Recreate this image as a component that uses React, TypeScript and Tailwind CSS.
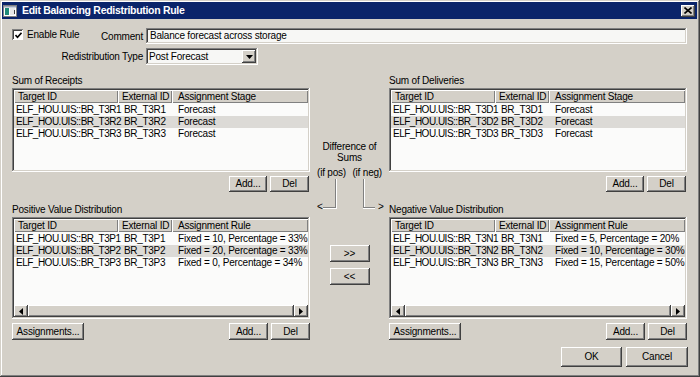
import React from "react";

const FONT = "font-['Liberation_Sans',Arial,sans-serif]";
const RAISED =
  "shadow-[inset_-1px_-1px_#404040,inset_1px_1px_#ffffff,inset_-2px_-2px_#808080,inset_2px_2px_#d4d0c8]";
const SUNKEN =
  "shadow-[inset_-1px_-1px_#ffffff,inset_1px_1px_#808080,inset_-2px_-2px_#d4d0c8,inset_2px_2px_#404040]";

function Btn({ label, className }: { label: string; className: string }) {
  return (
    <div
      className={`${RAISED} bg-[#d4d0c8] flex items-center justify-center leading-none text-black whitespace-nowrap ${className}`}
    >
      {label}
    </div>
  );
}

function ArrowLeft() {
  return (
    <svg width="4" height="7" viewBox="0 0 4 7">
      <path d="M4 0 L0 3.5 L4 7 Z" fill="#000" />
    </svg>
  );
}
function ArrowRight() {
  return (
    <svg width="4" height="7" viewBox="0 0 4 7">
      <path d="M0 0 L4 3.5 L0 7 Z" fill="#000" />
    </svg>
  );
}

function Table({
  headers,
  rows,
  scroll,
  heightClass,
}: {
  headers: string[];
  rows: string[][];
  scroll: boolean;
  heightClass: string;
}) {
  return (
    <div className={`${SUNKEN} bg-[#fbfbfa] p-[2px] flex flex-col ${heightClass}`}>
      <div className="flex h-[13px] shrink-0">
        <div className="w-[104px] bg-[#d4d0c8] shadow-[inset_1px_1px_#ffffff,inset_-1px_-1px_#808080] pl-[4px] leading-[13px] whitespace-nowrap overflow-hidden">
          {headers[0]}
        </div>
        <div className="w-[54px] bg-[#d4d0c8] shadow-[inset_1px_1px_#ffffff,inset_-1px_-1px_#808080] pl-[4px] leading-[13px] whitespace-nowrap overflow-hidden">
          {headers[1]}
        </div>
        <div className="flex-1 bg-[#d4d0c8] shadow-[inset_1px_1px_#ffffff,inset_-1px_-1px_#808080] pl-[6px] leading-[13px] whitespace-nowrap overflow-hidden">
          {headers[2]}
        </div>
      </div>
      <div className="flex-1 pt-[1px] overflow-hidden">
        {rows.map((r, i) => (
          <div
            key={i}
            className={`flex h-[12px] leading-[12px] whitespace-nowrap ${i === 1 ? "bg-[#dcdad6]" : ""}`}
          >
            <div className="w-[104px] pl-[2px] tracking-[-0.5px]">{r[0]}</div>
            <div className="w-[54px] pl-[6px] tracking-[-0.3px]">{r[1]}</div>
            <div className="flex-1 pl-[6px]">{r[2]}</div>
          </div>
        ))}
      </div>
      {scroll && (
        <div className="h-[12px] shrink-0 flex bg-[#e4e2dd]">
          <div className={`${RAISED} bg-[#d4d0c8] w-[14px] h-full flex items-center justify-center`}>
            <ArrowLeft />
          </div>
          <div className={`${RAISED} bg-[#d4d0c8] flex-1 h-full`} />
          <div className={`${RAISED} bg-[#d4d0c8] w-[14px] h-full flex items-center justify-center`}>
            <ArrowRight />
          </div>
        </div>
      )}
    </div>
  );
}

function Column({
  title1,
  title2,
  rows1,
  rows2,
  children,
}: {
  title1: string;
  title2: string;
  rows1: string[][];
  rows2: string[][];
  children?: React.ReactNode;
}) {
  return (
    <div className="w-[298px] flex flex-col">
      <div className="mt-[9px] h-[13px] leading-[13px]">{title1}</div>
      <div className="mt-[1px]">
        <Table
          headers={["Target ID", "External ID", "Assignment Stage"]}
          rows={rows1}
          scroll={false}
          heightClass="h-[84px]"
        />
      </div>
      <div className="mt-[4px] flex justify-end gap-[3px] pr-[1px]">
        <Btn label="Add..." className="w-[38px] h-[16px]" />
        <Btn label="Del" className="w-[39px] h-[16px]" />
      </div>
      <div className="mt-[12px] h-[12px] leading-[12px]">{title2}</div>
      <div className="mt-[1px]">
        <Table
          headers={["Target ID", "External ID", "Assignment Rule"]}
          rows={rows2}
          scroll={true}
          heightClass="h-[102px]"
        />
      </div>
      <div className="mt-[4px] flex justify-between">
        <Btn label="Assignments..." className="w-[72px] h-[17px]" />
        <div className="flex gap-[3px]">
          <Btn label="Add..." className="w-[39px] h-[17px]" />
          <Btn label="Del" className="w-[39px] h-[17px]" />
        </div>
      </div>
      {children}
    </div>
  );
}

export default function App() {
  return (
    <div
      className={`${FONT} text-[10px] tracking-[-0.2px] text-black w-[700px] h-[377px] bg-[#d4d0c8] pt-[2px] pl-[2px] pr-[3px] pb-[2px] shadow-[inset_-1px_-1px_#404040,inset_1px_1px_#d4d0c8,inset_-2px_-2px_#808080,inset_2px_2px_#ffffff] flex flex-col overflow-hidden`}
    >
      {/* Title bar */}
      <div className="h-[17px] bg-[#0a246a] flex items-center pl-[1px] pr-[2px] shrink-0">
        <svg width="14" height="12" viewBox="0 0 14 12" className="shrink-0">
          <rect x="0" y="0" width="14" height="12" fill="#ffffff" />
          <rect x="0.5" y="0.5" width="13" height="11" fill="none" stroke="#808080" />
          <rect x="2" y="3" width="4" height="7" fill="#1f8a78" />
          <rect x="7" y="3" width="5" height="7" fill="#e8e8e8" />
          <rect x="1" y="1" width="12" height="1.5" fill="#9aa4b8" />
          <rect x="11" y="5" width="1" height="4" fill="#404040" />
        </svg>
        <span className="ml-[5px] text-white font-bold text-[10.5px] tracking-[-0.3px] leading-none whitespace-nowrap">
          Edit Balancing Redistribution Rule
        </span>
        <div className="flex-1" />
        <div className={`${RAISED} bg-[#d4d0c8] w-[14px] h-[12px] flex items-center justify-center`}>
          <svg width="8" height="7" viewBox="0 0 8 7">
            <path d="M0.5 0.5 L7.5 6.5 M7.5 0.5 L0.5 6.5" stroke="#000" strokeWidth="1.6" />
          </svg>
        </div>
      </div>

      {/* Body */}
      <div className="px-[10px] flex flex-col">
        <div className="mt-[9px] h-[16px] flex">
          <div className="w-[131px] flex justify-between shrink-0">
            <div className="flex items-start pt-[1px]">
              <div className="w-[11px] h-[11px] bg-white shadow-[inset_1px_1px_#808080,inset_-1px_-1px_#ffffff,inset_2px_2px_#404040] flex items-center justify-center">
                <svg width="7" height="7" viewBox="0 0 7 7" className="ml-[1px] mt-[1px]">
                  <path d="M0.5 3 L2.5 5.2 L6.5 0.8" fill="none" stroke="#000" strokeWidth="1.6" />
                </svg>
              </div>
              <span className="ml-[4px] leading-[12px]">Enable Rule</span>
            </div>
            <div className="leading-[16px] pt-[1px]">Comment</div>
          </div>
          <div
            className={`ml-[3px] flex-1 h-[16px] bg-[#f7f7f5] ${SUNKEN} px-[4px] leading-[16px] whitespace-nowrap`}
          >
            Balance forecast across storage
          </div>
        </div>

        <div className="mt-[4px] h-[17px] flex">
          <div className="w-[131px] text-right leading-[17px] shrink-0">Redistribution Type</div>
          <div
            className={`ml-[3px] w-[112px] h-[17px] bg-[#f7f7f5] ${SUNKEN} p-[2px] flex items-center`}
          >
            <span className="flex-1 pl-[1px] leading-[13px]">Post Forecast</span>
            <div className={`${RAISED} bg-[#d4d0c8] w-[14px] h-[13px] flex items-center justify-center`}>
              <svg width="7" height="4" viewBox="0 0 7 4">
                <path d="M0 0 L7 0 L3.5 4 Z" fill="#000" />
              </svg>
            </div>
          </div>
        </div>

        <div className="flex">
          <Column
            title1="Sum of Receipts"
            title2="Positive Value Distribution"
            rows1={[
              ["ELF_HOU.UIS::BR_T3R1", "BR_T3R1", "Forecast"],
              ["ELF_HOU.UIS::BR_T3R2", "BR_T3R2", "Forecast"],
              ["ELF_HOU.UIS::BR_T3R3", "BR_T3R3", "Forecast"],
            ]}
            rows2={[
              ["ELF_HOU.UIS::BR_T3P1", "BR_T3P1", "Fixed = 10, Percentage = 33%"],
              ["ELF_HOU.UIS::BR_T3P2", "BR_T3P2", "Fixed = 20, Percentage = 33%"],
              ["ELF_HOU.UIS::BR_T3P3", "BR_T3P3", "Fixed = 0, Percentage = 34%"],
            ]}
          />

          {/* Center */}
          <div className="w-[79px] flex flex-col items-center pt-[76px]">
            <div className="leading-[11px] whitespace-nowrap">Difference of</div>
            <div className="leading-[11px]">Sums</div>
            <div className="mt-[4px] w-full flex justify-between px-[7px] leading-[11px] whitespace-nowrap">
              <span>(if pos)</span>
              <span>(if neg)</span>
            </div>
            <div className="relative w-full h-[34px]">
              <div className="absolute left-[25px] top-[1px] w-[1px] h-[29px] bg-[#808080]" />
              <div className="absolute left-[26px] top-[1px] w-[1px] h-[30px] bg-white" />
              <div className="absolute left-[13px] top-[29px] w-[13px] h-[1px] bg-[#808080]" />
              <div className="absolute left-[13px] top-[30px] w-[14px] h-[1px] bg-white" />
              <span className="absolute left-[7px] top-[23px] leading-[12px]">&lt;</span>
              <div className="absolute left-[53px] top-[1px] w-[1px] h-[29px] bg-[#808080]" />
              <div className="absolute left-[54px] top-[1px] w-[1px] h-[29px] bg-white" />
              <div className="absolute left-[53px] top-[29px] w-[12px] h-[1px] bg-[#808080]" />
              <div className="absolute left-[53px] top-[30px] w-[12px] h-[1px] bg-white" />
              <span className="absolute left-[68px] top-[23px] leading-[12px]">&gt;</span>
            </div>
            <Btn label=">>" className="mt-[33px] w-[40px] h-[17px]" />
            <Btn label="<<" className="mt-[6px] w-[40px] h-[17px]" />
          </div>

          <Column
            title1="Sum of Deliveries"
            title2="Negative Value Distribution"
            rows1={[
              ["ELF_HOU.UIS::BR_T3D1", "BR_T3D1", "Forecast"],
              ["ELF_HOU.UIS::BR_T3D2", "BR_T3D2", "Forecast"],
              ["ELF_HOU.UIS::BR_T3D3", "BR_T3D3", "Forecast"],
            ]}
            rows2={[
              ["ELF_HOU.UIS::BR_T3N1", "BR_T3N1", "Fixed = 5, Percentage = 20%"],
              ["ELF_HOU.UIS::BR_T3N2", "BR_T3N2", "Fixed = 10, Percentage = 30%"],
              ["ELF_HOU.UIS::BR_T3N3", "BR_T3N3", "Fixed = 15, Percentage = 50%"],
            ]}
          >
            <div className="mt-[7px] flex justify-end gap-[4px] -mr-[1px]">
              <Btn label="OK" className="w-[61px] h-[20px]" />
              <Btn label="Cancel" className="w-[62px] h-[20px]" />
            </div>
          </Column>
        </div>
      </div>
    </div>
  );
}
